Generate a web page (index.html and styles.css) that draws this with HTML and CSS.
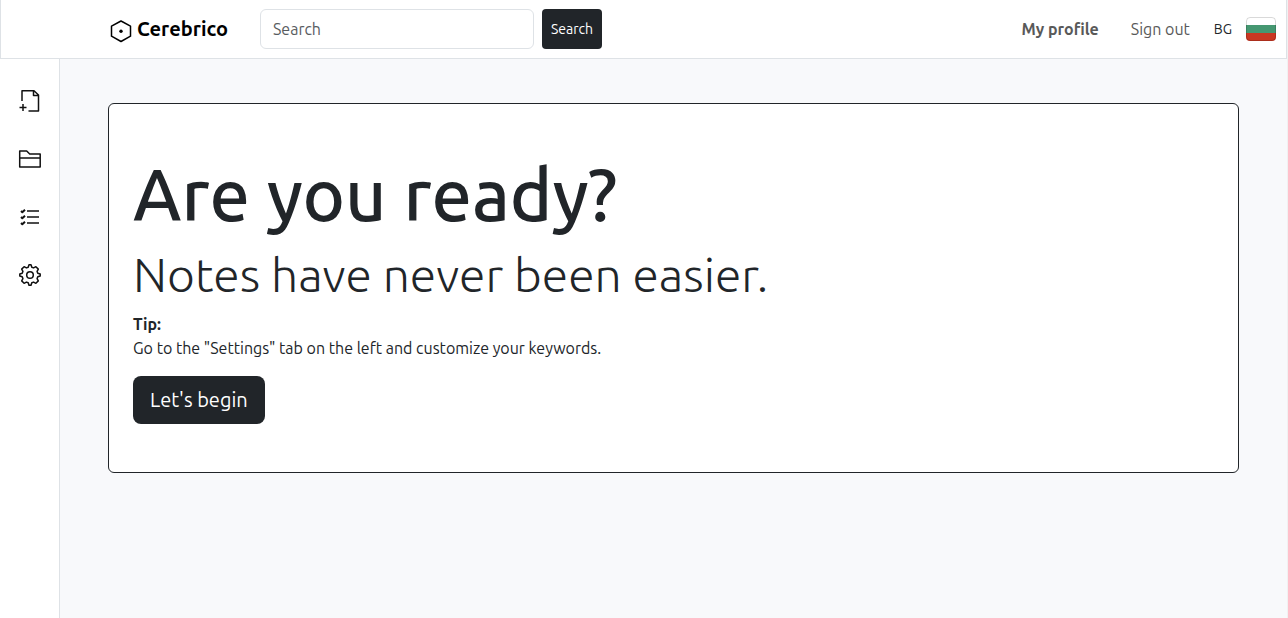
FILE: index.html
```html
<!DOCTYPE html>
<html lang="en">
<head>
<meta charset="utf-8">
<meta name="viewport" content="width=device-width, initial-scale=1">
<title>Cerebrico</title>
<link rel="stylesheet" href="styles.css">
</head>
<body>
<header class="navbar">
  <a class="brand" href="#">
    <svg class="brand-icon" viewBox="0 0 24 24" aria-hidden="true"><path d="M12 2 21.500 7.200V17.200L12 22.500 2.500 17.200V7.200Z"/><circle cx="12" cy="12.200" r="1.700"/></svg>
    Cerebrico
  </a>
  <form class="search" role="search">
    <input class="search-input" type="search" placeholder="Search" aria-label="Search">
    <button class="button search-button" type="submit">Search</button>
  </form>
  <nav class="account">
    <a class="account-link account-profile" href="#">My profile</a>
    <a class="account-link" href="#">Sign out</a>
    <a class="language" href="#">BG
      <svg class="flag" viewBox="0 0 30 24" aria-hidden="true">
        <defs><clipPath id="flag-shape"><rect width="30" height="24" rx="4"/></clipPath></defs>
        <g clip-path="url(#flag-shape)"><path fill="#fff" d="M0 0h30v8H0z"/><path fill="#459771" d="M0 8h30v8H0z"/><path fill="#c93722" d="M0 16h30v8H0z"/></g>
        <rect class="flag-edge" x=".5" y=".5" width="29" height="23" rx="3.5"/>
      </svg>
    </a>
  </nav>
</header>
<div class="layout">
  <nav class="sidebar" aria-label="Sections">
    <a href="#" aria-label="New note"><svg class="icon" viewBox="0 0 24 24"><path d="M4 12V1.700h12L20.500 6V22H10.500M15.500 2v4.500h5M5 15v7M1.500 18.500h7"/></svg></a>
    <a href="#" aria-label="Folders"><svg class="icon" viewBox="0 0 24 24"><path d="M1.700 4h7l3 3h10.500v13H1.700ZM1.700 11h20.500"/></svg></a>
    <a href="#" aria-label="Tasks"><svg class="icon" viewBox="0 0 24 24"><path d="M9 6h12M9 12h12M9 18h12"/><path class="check" d="m3 6 1.300 1.200L7 4.700M3 12l1.300 1.200L7 10.700M3 18l1.300 1.200L7 16.700"/></svg></a>
    <a href="#" aria-label="Settings"><svg class="icon" viewBox="0 0 24 24"><path d="M10.200 4.200 11 1.800h2l.8 2.400 1.800.7 2.300-1.200 2.400 2.400-1.200 2.300.7 1.800 2.400.8v2l-2.400.8-.7 1.800 1.200 2.300-2.400 2.400-2.300-1.200-1.800.7-.8 2.400h-2l-.8-2.400-1.800-.7-2.300 1.200-2.400-2.400 1.200-2.300-.7-1.800-2.400-.8v-2l2.400-.8.7-1.800-1.200-2.300 2.400-2.400 2.300 1.200Z"/><circle cx="12" cy="12" r="3.300"/></svg></a>
  </nav>
  <main class="content">
    <section class="card">
      <h1 class="title">Are you ready?</h1>
      <p class="subtitle">Notes have never been easier.</p>
      <p class="tip"><strong>Tip:</strong><br>Go to the "Settings" tab on the left and customize your keywords.</p>
      <button class="button begin-button" type="button">Let's begin</button>
    </section>
  </main>
</div>
</body>
</html>
```
FILE: styles.css
```css
* { box-sizing: border-box; }

body {
  margin: 0;
  min-height: 100vh;
  display: flex;
  flex-direction: column;
  border-right: 1px solid #f1f1f1;
  background: #f8f9fb;
  color: #212529;
  font-family: Ubuntu, "Noto Sans", sans-serif;
  font-size: 16px;
  line-height: 24px;
}

a { color: inherit; text-decoration: none; }

.navbar {
  display: flex;
  align-items: center;
  padding: 9px 10px 9px 108px;
  border: 1px solid #dee2e6;
  border-top: 0;
  background: #fff;
}

.brand {
  display: flex;
  align-items: center;
  gap: 4px;
  color: #000;
  font-size: 20px;
  font-weight: 700;
}

.brand-icon { width: 24px; height: 24px; margin-top: 4px; fill: none; stroke: #000; stroke-width: 1.5; stroke-linejoin: round; }
.brand-icon circle { fill: #000; stroke: none; }

.search { display: flex; gap: 8px; margin-left: 32px; }

.search-input {
  width: 274px;
  height: 40px;
  padding: 0 12px;
  border: 1px solid #dee2e6;
  border-radius: 6px;
  background: #fff;
  color: #212529;
  font: inherit;
}

.search-input::placeholder { color: #595c5f; opacity: 1; }

.button {
  border: 0;
  background: #212529;
  color: #fff;
  font-family: inherit;
}

.search-button { width: 60px; padding: 0; border-radius: 4px; font-size: 14px; }

.account { display: flex; align-items: center; gap: 32px; margin-left: auto; padding-bottom: 1px; }
.account-link { color: #595959; }
.account-profile { font-weight: 700; }
.language { display: flex; align-items: center; gap: 14px; margin-left: -8px; font-size: 14px; }
.flag { width: 30px; height: 24px; }
.flag-edge { fill: none; stroke: #000; stroke-opacity: .15; }

.layout { flex: 1; display: flex; }

.sidebar {
  width: 60px;
  display: flex;
  flex-direction: column;
  align-items: center;
  gap: 34px;
  padding-top: 30px;
  border-right: 1px solid #dee2e6;
  background: #fff;
}

.sidebar a { display: flex; }
.icon { width: 24px; height: 24px; fill: none; stroke: #111; stroke-width: 1.5; stroke-linejoin: round; }
.check { stroke-width: 2; }

.content { flex: 1; padding: 44px 48px; }

.card {
  padding: 48px 24px;
  border: 1px solid #212529;
  border-radius: 6px;
  background: #fff;
}

.title { margin: 0 0 8px; font-size: 72px; font-weight: 500; line-height: 86px; }
.subtitle { margin: 0 0 10px; font-size: 48px; font-weight: 300; line-height: 56px; }
.tip { margin: 0 0 16px; }

.begin-button {
  padding: 9px 17px;
  border-radius: 8px;
  font-size: 20px;
  line-height: 30px;
}
```
